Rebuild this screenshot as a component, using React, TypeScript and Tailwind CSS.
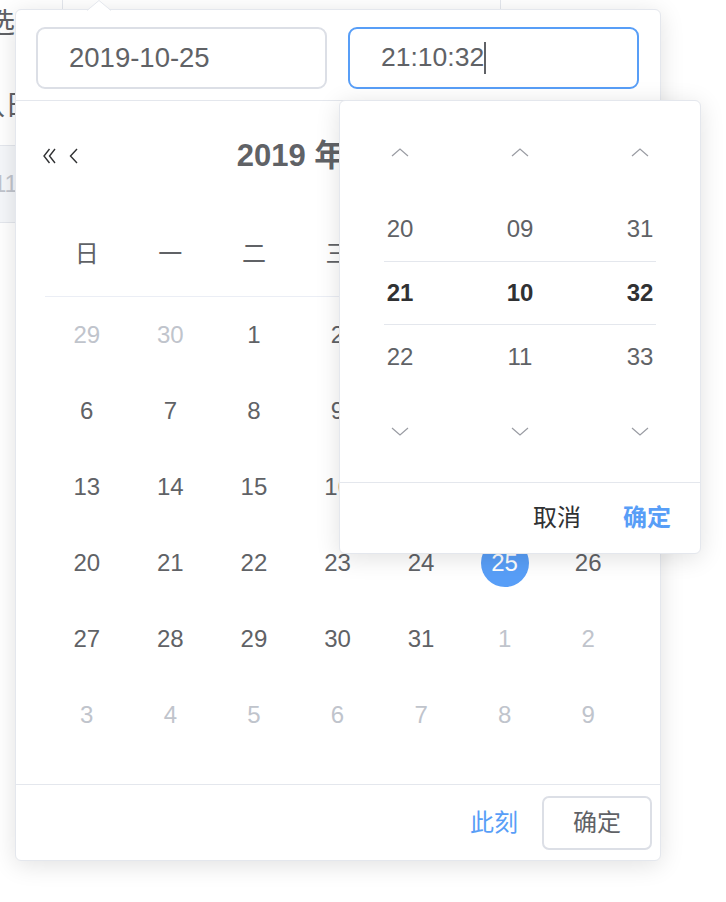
import React from "react";

function ChevUp() {
  return (
    <svg width="18" height="9" viewBox="0 0 18 9" fill="none">
      <polyline points="1,8 9,1 17,8" stroke="#9a9ca3" strokeWidth="1.2" />
    </svg>
  );
}
function ChevDown() {
  return (
    <svg width="18" height="9" viewBox="0 0 18 9" fill="none">
      <polyline points="1,1 9,8 17,1" stroke="#9a9ca3" strokeWidth="1.2" />
    </svg>
  );
}
function DoubleLeft() {
  return (
    <svg width="13" height="16" viewBox="0 0 13 16" fill="none">
      <polyline points="6.5,1 1,8 6.5,15" stroke="#303133" strokeWidth="1.4" />
      <polyline points="12,1 6.5,8 12,15" stroke="#303133" strokeWidth="1.4" />
    </svg>
  );
}
function SingleLeft() {
  return (
    <svg width="9" height="16" viewBox="0 0 9 16" fill="none">
      <polyline points="8,1 1.5,8 8,15" stroke="#303133" strokeWidth="1.4" />
    </svg>
  );
}
function DoubleRight() {
  return (
    <svg width="13" height="16" viewBox="0 0 13 16" fill="none">
      <polyline points="1,1 6.5,8 1,15" stroke="#303133" strokeWidth="1.4" />
      <polyline points="6.5,1 12,8 6.5,15" stroke="#303133" strokeWidth="1.4" />
    </svg>
  );
}
function SingleRight() {
  return (
    <svg width="9" height="16" viewBox="0 0 9 16" fill="none">
      <polyline points="1,1 7.5,8 1,15" stroke="#303133" strokeWidth="1.4" />
    </svg>
  );
}

type Cell = { d: number; muted?: boolean; sel?: boolean };

const rows: Cell[][] = [
  [{ d: 29, muted: true }, { d: 30, muted: true }, { d: 1 }, { d: 2 }, { d: 3 }, { d: 4 }, { d: 5 }],
  [{ d: 6 }, { d: 7 }, { d: 8 }, { d: 9 }, { d: 10 }, { d: 11 }, { d: 12 }],
  [{ d: 13 }, { d: 14 }, { d: 15 }, { d: 16 }, { d: 17 }, { d: 18 }, { d: 19 }],
  [{ d: 20 }, { d: 21 }, { d: 22 }, { d: 23 }, { d: 24 }, { d: 25, sel: true }, { d: 26 }],
  [{ d: 27 }, { d: 28 }, { d: 29 }, { d: 30 }, { d: 31 }, { d: 1, muted: true }, { d: 2, muted: true }],
  [3, 4, 5, 6, 7, 8, 9].map((d) => ({ d, muted: true })),
];

const weekdays = ["日", "一", "二", "三", "四", "五", "六"];

const timeCols = [
  ["20", "21", "22"],
  ["09", "10", "11"],
  ["31", "32", "33"],
];

export default function App() {
  return (
    <div className="relative w-[726px] h-[902px] overflow-hidden bg-white font-['Liberation_Sans','Noto_Sans_CJK_SC',sans-serif] text-[#606266]">
      {/* background page */}
      <div className="flex flex-col">
        <div className="flex h-[9px]">
          <div className="ml-[62px] w-px h-full bg-[#e4e7ed]" />
          <div className="ml-[437px] w-px h-full bg-[#e4e7ed]" />
        </div>
        <div className="w-[15px] overflow-hidden flex flex-col">
          <div className="h-[30px] text-[28px] leading-[30px] whitespace-nowrap ml-[-13px]">选</div>
          <div className="mt-[52px] h-[30px] text-[28px] leading-[30px] whitespace-nowrap ml-[-23px]">认日</div>
          <div className="mt-[24px] h-[78px] border-y border-[#e4e7ed] bg-[#f5f7fa] flex items-center">
            <span className="text-[24px] text-[#c0c4cc] whitespace-nowrap ml-[-7px]">11</span>
          </div>
        </div>
      </div>

      {/* popover */}
      <div className="absolute left-[15px] top-[9px] w-[646px] border border-[#e4e7ed] rounded-[6px] bg-white shadow-[0_4px_24px_rgba(0,0,0,0.12)]">
        {/* arrow */}
        <svg className="absolute left-[71px] top-[-10px]" width="24" height="11" viewBox="0 0 24 11">
          <polygon points="0,11 12,0.5 24,11" fill="white" />
          <polyline points="0,10.5 12,0.5 24,10.5" fill="none" stroke="#e4e7ed" strokeWidth="1" />
        </svg>

        {/* header inputs */}
        <div className="flex gap-[21px] pt-[17px] pb-[11px] pl-[20px] pr-[21px] border-b border-[#e4e7ed]">
          <div className="w-[291px] h-[62px] border-2 border-[#dcdfe6] rounded-[9px] flex items-center pl-[31px] text-[27.5px]">
            2019-10-25
          </div>
          <div className="w-[291px] h-[62px] border-2 border-[#589ef7] rounded-[9px] flex items-center pl-[31px] text-[26.5px]">
            <span>21:10:32</span>
            <span className="w-[2px] h-[32px] bg-[#606266]" />
          </div>
        </div>

        {/* calendar */}
        <div className="flex flex-col">
          <div className="mt-[30px] mb-[30px] h-[50px] px-[27px] flex items-center justify-between">
            <div className="w-[39px] flex items-center gap-[13px]">
              <DoubleLeft />
              <SingleLeft />
            </div>
            <div className="flex-1 flex justify-center text-[31px] font-bold text-[#606266]">
              <span className="px-[10px]">2019 年</span>
              <span className="px-[10px]">10 月</span>
            </div>
            <div className="w-[39px] flex items-center justify-end gap-[13px]">
              <SingleRight />
              <DoubleRight />
            </div>
          </div>
          <div className="pl-[29px] pr-[30px] pb-[31px]">
            <div className="grid grid-cols-7 h-[86px] items-center border-b border-[#ebeef5] text-[24px]">
              {weekdays.map((w) => (
                <div key={w} className="text-center">{w}</div>
              ))}
            </div>
            {rows.map((r, i) => (
              <div key={i} className="grid grid-cols-7 h-[76px] items-center text-[24px]">
                {r.map((c, j) => (
                  <div key={j} className="flex justify-center">
                    {c.sel ? (
                      <span className="w-[48px] h-[48px] rounded-full bg-[#589ef7] text-white flex items-center justify-center">
                        {c.d}
                      </span>
                    ) : (
                      <span className={c.muted ? "text-[#c0c4cc]" : "text-[#606266]"}>{c.d}</span>
                    )}
                  </div>
                ))}
              </div>
            ))}
          </div>
        </div>

        {/* footer */}
        <div className="h-[76px] border-t border-[#e4e7ed] flex items-center justify-end gap-[24px] pr-[8px] text-[24px]">
          <span className="text-[#589ef7]">此刻</span>
          <div className="w-[110px] h-[54px] border-2 border-[#dcdfe6] rounded-[7px] flex items-center justify-center text-[#606266]">
            确定
          </div>
        </div>

        {/* time panel */}
        <div className="absolute left-[323px] top-[90px] w-[362px] border border-[#e4e7ed] rounded-[6px] bg-white shadow-[0_4px_24px_rgba(0,0,0,0.12)]">
          <div className="relative flex h-[381px]">
            <div className="absolute left-[44px] right-[44px] top-[160px] h-[64px] border-y border-[#e4e7ed]" />
            {timeCols.map((col, i) => (
              <div key={i} className="w-[120px] flex flex-col items-center">
                <div className="h-[96px] pt-[47px]"><ChevUp /></div>
                {col.map((v, k) => (
                  <div
                    key={k}
                    className={
                      "h-[64px] flex items-center text-[24px] " +
                      (k === 1 ? "font-bold text-[#303133]" : "text-[#606266]")
                    }
                  >
                    {v}
                  </div>
                ))}
                <div className="h-[93px] pt-[38px]"><ChevDown /></div>
              </div>
            ))}
          </div>
          <div className="h-[71px] border-t border-[#e4e7ed] flex items-center justify-end gap-[42px] pr-[29px] text-[24px]">
            <span className="text-[#303133]">取消</span>
            <span className="text-[#589ef7] font-bold">确定</span>
          </div>
        </div>
      </div>
    </div>
  );
}
